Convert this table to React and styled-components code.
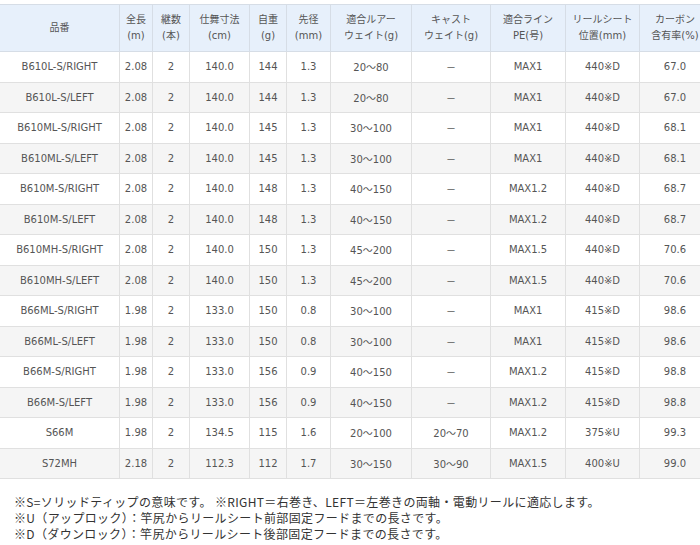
import React from 'react';
import styled, { createGlobalStyle } from 'styled-components';

const GlobalStyle = createGlobalStyle`
  html, body {
    margin: 0;
    padding: 0;
    background: #fff;
  }
`;

const columns = [
  { label: ['品番'], width: 119 },
  { label: ['全長', '(m)'], width: 32 },
  { label: ['継数', '(本)'], width: 36 },
  { label: ['仕舞寸法', '(cm)'], width: 59 },
  { label: ['自重', '(g)'], width: 36 },
  { label: ['先径', '(mm)'], width: 43 },
  { label: ['適合ルアー', 'ウェイト(g)'], width: 80 },
  { label: ['キャスト', 'ウェイト(g)'], width: 78 },
  { label: ['適合ライン', 'PE(号)'], width: 74 },
  { label: ['リールシート', '位置(mm)'], width: 73 },
  { label: ['カーボン', '含有率(%)'], width: 70 },
];

const rows = [
  ['B610L-S/RIGHT', '2.08', '2', '140.0', '144', '1.3', '20～80', '－', 'MAX1', '440※D', '67.0'],
  ['B610L-S/LEFT', '2.08', '2', '140.0', '144', '1.3', '20～80', '－', 'MAX1', '440※D', '67.0'],
  ['B610ML-S/RIGHT', '2.08', '2', '140.0', '145', '1.3', '30～100', '－', 'MAX1', '440※D', '68.1'],
  ['B610ML-S/LEFT', '2.08', '2', '140.0', '145', '1.3', '30～100', '－', 'MAX1', '440※D', '68.1'],
  ['B610M-S/RIGHT', '2.08', '2', '140.0', '148', '1.3', '40～150', '－', 'MAX1.2', '440※D', '68.7'],
  ['B610M-S/LEFT', '2.08', '2', '140.0', '148', '1.3', '40～150', '－', 'MAX1.2', '440※D', '68.7'],
  ['B610MH-S/RIGHT', '2.08', '2', '140.0', '150', '1.3', '45～200', '－', 'MAX1.5', '440※D', '70.6'],
  ['B610MH-S/LEFT', '2.08', '2', '140.0', '150', '1.3', '45～200', '－', 'MAX1.5', '440※D', '70.6'],
  ['B66ML-S/RIGHT', '1.98', '2', '133.0', '150', '0.8', '30～100', '－', 'MAX1', '415※D', '98.6'],
  ['B66ML-S/LEFT', '1.98', '2', '133.0', '150', '0.8', '30～100', '－', 'MAX1', '415※D', '98.6'],
  ['B66M-S/RIGHT', '1.98', '2', '133.0', '156', '0.9', '40～150', '－', 'MAX1.2', '415※D', '98.8'],
  ['B66M-S/LEFT', '1.98', '2', '133.0', '156', '0.9', '40～150', '－', 'MAX1.2', '415※D', '98.8'],
  ['S66M', '1.98', '2', '134.5', '115', '1.6', '20～100', '20～70', 'MAX1.2', '375※U', '99.3'],
  ['S72MH', '2.18', '2', '112.3', '112', '1.7', '30～150', '30～90', 'MAX1.5', '400※U', '99.0'],
];

const notes = [
  '※S=ソリッドティップの意味です。 ※RIGHT＝右巻き、LEFT＝左巻きの両軸・電動リールに適応します。',
  '※U（アップロック）：竿尻からリールシート前部固定フードまでの長さです。',
  '※D（ダウンロック）：竿尻からリールシート後部固定フードまでの長さです。',
];

const Page = styled.div`
  width: 700px;
  padding-top: 4px;
  font-family: 'DejaVu Sans', 'Noto Sans CJK JP', sans-serif;
  overflow: hidden;
`;

const SpecTable = styled.table`
  width: 701px;
  border-collapse: collapse;
  table-layout: fixed;
  color: #555;
  font-size: 10px;
`;

const HeadCell = styled.th`
  width: ${(p) => p.$w}px;
  height: 46px;
  padding: 0;
  background: #e7f0fb;
  border: 1px solid #d6dde6;
  border-left: ${(p) => (p.$first ? 'none' : '1px solid #d6dde6')};
  font-weight: normal;
  line-height: 16px;
  text-align: center;
  vertical-align: middle;
`;

const BodyRow = styled.tr`
  height: 30.5px;
  background: ${(p) => (p.$odd ? '#f5f5f5' : '#fff')};
`;

const Cell = styled.td`
  padding: 0;
  border: 1px solid #e0e0e0;
  border-left: ${(p) => (p.$first ? 'none' : '1px solid #e0e0e0')};
  text-align: center;
  vertical-align: middle;
  white-space: nowrap;
`;

const Notes = styled.div`
  margin-top: 15px;
  padding-left: 14px;
  font-family: 'Noto Sans CJK JP', sans-serif;
  font-size: 12px;
  letter-spacing: 0.35px;
  line-height: 16px;
  color: #333;
`;

const NoteLine = styled.div`
  height: 16px;
  white-space: nowrap;
`;

export default function App() {
  return (
    <>
      <GlobalStyle />
      <Page>
        <SpecTable>
          <thead>
            <tr>
              {columns.map((c, i) => (
                <HeadCell key={i} $w={c.width} $first={i === 0}>
                  {c.label.map((l, j) => (
                    <div key={j}>{l}</div>
                  ))}
                </HeadCell>
              ))}
            </tr>
          </thead>
          <tbody>
            {rows.map((r, i) => (
              <BodyRow key={i} $odd={i % 2 === 1}>
                {r.map((v, j) => (
                  <Cell key={j} $first={j === 0}>{v}</Cell>
                ))}
              </BodyRow>
            ))}
          </tbody>
        </SpecTable>
        <Notes>
          {notes.map((n, i) => (
            <NoteLine key={i}>{n}</NoteLine>
          ))}
        </Notes>
      </Page>
    </>
  );
}
